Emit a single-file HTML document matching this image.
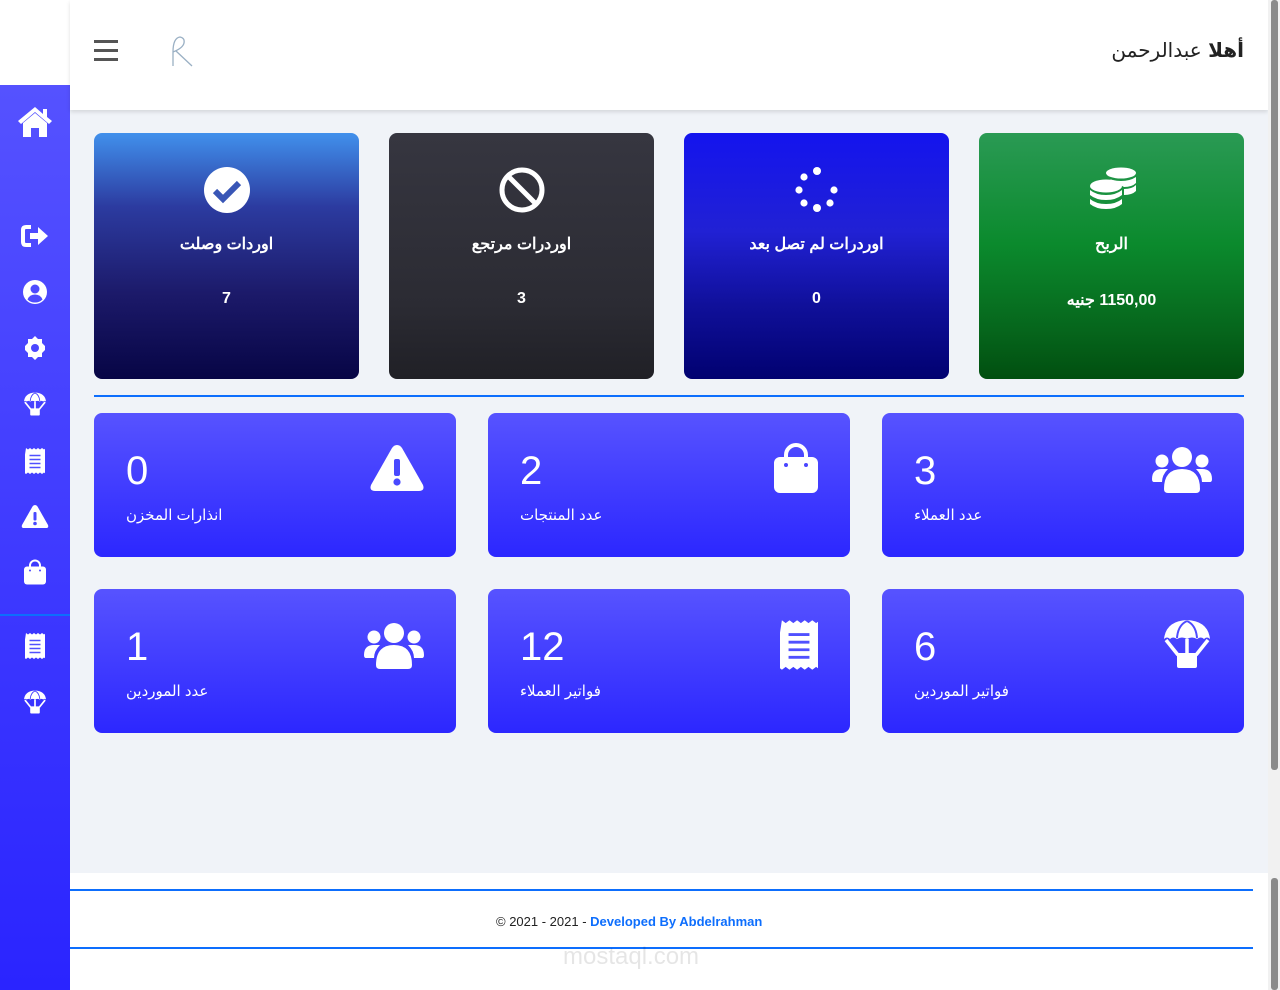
<!DOCTYPE html>
<html><head><meta charset="utf-8">
<style>
*{box-sizing:border-box;margin:0;padding:0}
body{width:1280px;height:990px;overflow:hidden;background:#f0f3f8;font-family:"Liberation Sans","Noto Sans CJK SC",sans-serif;position:relative}
.abs{position:absolute}
.sb{left:0;top:85px;width:70px;height:905px;background:linear-gradient(#5552ff,#2a24ff)}
.sbi{position:absolute;left:21px;width:28px;height:28px}
.hdr{left:70px;top:0;width:1198px;height:110px;background:#fff;box-shadow:0 2px 4px rgba(0,0,0,.12)}
.tc{position:absolute;top:133px;width:265px;height:246px;border-radius:8px;color:#fff;text-align:center;font-weight:bold}
.tc svg{position:absolute;left:109px;top:33px;width:48px;height:48px}
.tc .t{position:absolute;width:100%;font-size:16px;top:101px}
.tc .v{position:absolute;width:100%;font-size:16px;top:157px}
.bc{position:absolute;width:362px;height:144px;border-radius:8px;background:linear-gradient(#5753ff,#2c27ff);color:#fff}
.bc .n{position:absolute;left:32px;top:35px;font-size:40px;font-weight:300;line-height:46px}
.bc .l{position:absolute;left:32px;top:93px;font-size:15px;font-family:"Liberation Sans","DejaVu Sans",sans-serif}
.bc svg{position:absolute;right:32px;top:30px;width:60px;height:52px}
.foot{left:70px;top:873px;width:1198px;height:117px;background:#fff}
</style></head><body>
<svg width="0" height="0" style="position:absolute">
<defs>
<symbol id="users" viewBox="0 0 60 48"><circle cx="30" cy="12" r="10" fill="#fff"/><circle cx="10" cy="16" r="6.5" fill="#fff"/><circle cx="50" cy="16" r="6.5" fill="#fff"/><path d="M12 44q0-20 18-20t18 20q0 4-4 4H16q-4 0-4-4z" fill="#fff"/><path d="M0 34q0-10 10-10h6q-6 6-6 13H2q-2 0-2-3zM60 34q0-10-10-10h-6q6 6 6 13h8q2 0 2-3z" fill="#fff"/></symbol>
<symbol id="para" viewBox="0 0 50 50"><path d="M2 20Q4 2 25 1Q46 2 48 20Q45 17 42 20Q39 17 35 20Q30 17 25 20Q20 17 15 20Q11 17 8 20Q5 17 2 20z" fill="#fff"/><path d="M15 19Q16 6 25 2M35 19Q34 6 25 2" stroke="#4f4bff" stroke-width="2" fill="none"/><path d="M4 21l12 15M46 21L34 36M25 20v16" stroke="#fff" stroke-width="3.5" fill="none"/><rect x="15" y="34" width="20" height="15" rx="2" fill="#fff"/></symbol>
<symbol id="rcpt" viewBox="0 0 40 52"><path d="M2 0l4 3 4-3 4 3 4-3 4 3 4-3 4 3 4-3 4 3 4-3v52l-4-3-4 3-4-3-4 3-4-3-4 3-4-3-4 3-4-3-4 3-4-3-4 3z" fill="#fff"/><path d="M9 15h22M9 23h22M9 31h22M9 39h22" stroke="#5050ff" stroke-width="3"/></symbol>
<symbol id="warn" viewBox="0 0 56 50"><path d="M28 2q3 0 5 3l21 37q2 6-4 6H6q-6 0-4-6L23 5q2-3 5-3z" fill="#fff"/><rect x="25" y="16" width="6" height="17" rx="2" fill="#4949ff"/><circle cx="28" cy="39" r="3.6" fill="#4949ff"/></symbol>
<symbol id="bag" viewBox="0 0 44 50"><path d="M12 16v-4a10 10 0 0 1 20 0v4" stroke="#fff" stroke-width="4" fill="none"/><rect x="0" y="14" width="44" height="36" rx="6" fill="#fff"/><circle cx="12" cy="22" r="2" fill="#4a45ff"/><circle cx="32" cy="22" r="2" fill="#4a45ff"/></symbol>
</defs></svg>

<div class="abs" style="left:0;top:0;width:70px;height:85px;background:#fff"></div>
<div class="abs sb">
<svg class="sbi" style="left:17px;top:20px;width:36px;height:32px" viewBox="0 0 36 32"><path d="M18 2L1 16l3 3 14-12 14 12 3-3-5-4V4h-4v5z" fill="#fff"/><path d="M6 18l12-10 12 10v14h-8v-9h-8v9H6z" fill="#fff"/></svg>
<svg class="sbi" style="top:139px;height:24px" viewBox="0 0 28 24"><path d="M10 3H5Q2 3 2 6v12q0 3 3 3h5" stroke="#fff" stroke-width="4" fill="none"/><path d="M9 9h8V3l10 9-10 9v-6H9z" fill="#fff"/></svg>
<svg class="sbi" style="top:195px;height:24px;left:23px;width:24px" viewBox="0 0 24 24"><circle cx="12" cy="12" r="12" fill="#fff"/><circle cx="12" cy="9" r="4.5" fill="#4e4bff"/><path d="M4.5 19.5q2-5 7.5-5t7.5 5q-3 3-7.5 3t-7.5-3z" fill="#4e4bff"/></svg>
<svg class="sbi" style="top:251px;left:23px;width:24px;height:24px" viewBox="0 0 24 24"><path d="M12 0l3 3h4v4l3 3v4l-3 3v4h-4l-3 3-3-3H5v-4l-3-3v-4l3-3V3h4z" fill="#fff"/><circle cx="12" cy="12" r="4" fill="#4b47ff"/></svg>
<svg class="sbi" style="top:306px;left:23px;width:24px;height:26px"><use href="#para"/></svg>
<svg class="sbi" style="top:363px;left:25px;width:20px;height:26px"><use href="#rcpt"/></svg>
<svg class="sbi" style="top:419px;left:21px;width:28px;height:25px"><use href="#warn"/></svg>
<svg class="sbi" style="top:474px;left:24px;width:22px;height:26px"><use href="#bag"/></svg>
<div class="abs" style="left:0;top:529px;width:70px;height:2px;background:#0d6efd"></div>
<svg class="sbi" style="top:548px;left:25px;width:20px;height:26px"><use href="#rcpt"/></svg>
<svg class="sbi" style="top:604px;left:23px;width:24px;height:26px"><use href="#para"/></svg>
</div>

<div class="abs hdr">
<div class="abs" style="left:24px;top:40px;width:24px;height:3px;background:#555"></div>
<div class="abs" style="left:24px;top:49px;width:24px;height:3px;background:#555"></div>
<div class="abs" style="left:24px;top:58px;width:24px;height:3px;background:#555"></div>
<svg class="abs" style="left:100px;top:34px;width:26px;height:34px" viewBox="0 0 26 34"><path d="M3 32V18M3 18Q3 4 10 3Q15 4 14 9Q13 14 3 18M6 17L22 32" stroke="#9ab0c4" stroke-width="1.3" fill="none"/></svg>
<div class="abs" style="right:24px;top:38px;font-size:20px;color:#222;font-family:'DejaVu Sans',sans-serif;direction:rtl"><b>أهلا</b> عبدالرحمن</div>
</div>

<div class="tc" style="left:94px;background:linear-gradient(#4190ec 0%,#2c3ba0 30%,#1c1a6a 65%,#070545 100%)">
<svg viewBox="0 0 48 48"><circle cx="24" cy="24" r="23" fill="#fff"/><path d="M12 25l8 8 16-16" stroke="#3956b6" stroke-width="6" fill="none"/></svg>
<div class="t">اوردات وصلت</div><div class="v">7</div></div>
<div class="tc" style="left:389px;background:linear-gradient(#363640,#2b2b33 70%,#202026)">
<svg viewBox="0 0 48 48"><circle cx="24" cy="24" r="20" stroke="#fff" stroke-width="5" fill="none"/><path d="M10 10l28 28" stroke="#fff" stroke-width="5"/></svg>
<div class="t">اوردرات مرتجع</div><div class="v">3</div></div>
<div class="tc" style="left:684px;background:linear-gradient(#1414ee,#2121d4 40%,#10109a 70%,#010170)">
<svg viewBox="0 0 48 48" fill="#fff"><circle cx="24" cy="5" r="4"/><circle cx="11" cy="11" r="3.6"/><circle cx="6" cy="24" r="3.6"/><circle cx="11" cy="37" r="3.6"/><circle cx="24" cy="42" r="4"/><circle cx="37" cy="37" r="3.6"/><circle cx="41" cy="24" r="3.6"/></svg>
<div class="t">اوردرات لم تصل بعد</div><div class="v">0</div></div>
<div class="tc" style="left:979px;background:linear-gradient(#2a9a54,#0b8a2d 45%,#06661c 80%,#014f10)">
<svg viewBox="0 0 48 48" fill="#fff"><ellipse cx="33" cy="7" rx="15" ry="5.5"/><path d="M18 11q6 4 15 4t15-4v6q-4 4-12 4M36 23q8 0 12-4v6q-4 4-12 4z"/><ellipse cx="18" cy="20" rx="16" ry="6.5"/><path d="M2 24q6 5 16 5t16-5v5q-6 5-16 5T2 29zM2 33q6 5 16 5t16-5v5q-6 5-16 5T2 38z"/></svg>
<div class="t">الربح</div><div class="v" style="direction:rtl">1150,00 جنيه</div></div>

<div class="abs" style="left:94px;top:395px;width:1150px;height:2px;background:#0d6efd"></div>

<div class="bc" style="left:94px;top:413px"><div class="n">0</div><div class="l">انذارات المخزن</div><svg viewBox="0 0 56 50" style="right:31px;width:56px;height:50px"><use href="#warn"/></svg></div>
<div class="bc" style="left:488px;top:413px"><div class="n">2</div><div class="l">عدد المنتجات</div><svg viewBox="0 0 44 50" style="width:44px;height:50px"><use href="#bag"/></svg></div>
<div class="bc" style="left:882px;top:413px"><div class="n">3</div><div class="l">عدد العملاء</div><svg viewBox="0 0 60 48"><use href="#users"/></svg></div>
<div class="bc" style="left:94px;top:589px"><div class="n">1</div><div class="l">عدد الموردين</div><svg viewBox="0 0 60 48"><use href="#users"/></svg></div>
<div class="bc" style="left:488px;top:589px"><div class="n">12</div><div class="l">فواتير العملاء</div><svg viewBox="0 0 40 52" style="width:38px;height:52px"><use href="#rcpt"/></svg></div>
<div class="bc" style="left:882px;top:589px"><div class="n">6</div><div class="l">فواتير الموردين</div><svg viewBox="0 0 50 50" style="width:50px;height:50px"><use href="#para"/></svg></div>

<div class="abs foot">
<div class="abs" style="left:0;top:16px;width:1183px;height:2px;background:#0d6efd"></div>
<div class="abs" style="left:426px;top:41px;font-size:13px;color:#222">© 2021 - 2021 - <b style="color:#0d6efd">Developed By Abdelrahman</b></div>
<div class="abs" style="left:0;top:74px;width:1183px;height:2px;background:#0d6efd"></div>
<div class="abs" style="left:493px;top:70px;font-size:24px;color:rgba(0,0,0,.1)">mostaql.com</div>
</div>

<div class="abs" style="left:1268px;top:0;width:12px;height:990px;background:#f1f1f1"></div>
<div class="abs" style="left:1271px;top:0;width:7px;height:770px;background:#8a8a8a;border-radius:3px"></div>
<div class="abs" style="left:1271px;top:878px;width:7px;height:112px;background:#8a8a8a;border-radius:3px"></div>
</body></html>
